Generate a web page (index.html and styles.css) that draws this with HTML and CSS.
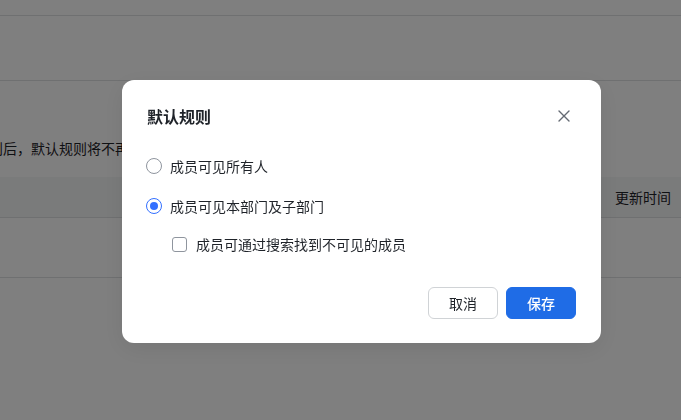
FILE: index.html
```html
<!DOCTYPE html>
<html lang="zh-CN">
<head>
<meta charset="utf-8">
<title>默认规则</title>
<link rel="stylesheet" href="styles.css">
</head>
<body>
<div class="page">
  <div class="topbar"></div>
  <div class="section"></div>
  <div class="desc"><span class="desc-text">设置自定义规则后，默认规则将不再生效</span></div>
  <div class="table-head"><span class="th">更新时间</span></div>
  <div class="table-row"></div>
</div>

<div class="mask">
  <div class="modal">
    <div class="modal-header">
      <h2 class="modal-title">默认规则</h2>
      <button class="close" aria-label="关闭">
        <svg width="12" height="12" viewBox="0 0 12 12"><path d="M1 1L11 11M11 1L1 11" stroke="#646a73" stroke-width="1.4" stroke-linecap="round" fill="none"/></svg>
      </button>
    </div>
    <div class="modal-body">
      <label class="radio-row first"><span class="radio"></span><span class="label">成员可见所有人</span></label>
      <label class="radio-row"><span class="radio checked"></span><span class="label">成员可见本部门及子部门</span></label>
      <label class="check-row"><span class="checkbox"></span><span class="label">成员可通过搜索找到不可见的成员</span></label>
    </div>
    <div class="modal-footer">
      <button class="btn btn-default">取消</button>
      <button class="btn btn-primary">保存</button>
    </div>
  </div>
</div>
</body>
</html>
```

FILE: styles.css
```css
* { box-sizing: border-box; }
html, body { margin: 0; padding: 0; }
body {
  width: 681px;
  height: 420px;
  overflow: hidden;
  background: #ffffff;
  font-family: "Noto Sans CJK SC", "Noto Sans", sans-serif;
  color: #1f2329;
  font-size: 14px;
}
.page { width: 681px; }
.topbar { height: 16px; border-bottom: 1px solid #dee0e3; }
.section { height: 65px; border-bottom: 1px solid #dee0e3; }
.desc {
  height: 96px;
  padding-top: 56px;
  overflow: hidden;
  white-space: nowrap;
  line-height: 22px;
}
.desc-text { display: inline-block; margin-left: -95px; }
.table-head {
  height: 41px;
  background: #f5f6f7;
  border-bottom: 1px solid #dee0e3;
  display: flex;
  justify-content: flex-end;
  align-items: center;
  padding-right: 10px;
  line-height: 22px;
}
.table-row { height: 60px; border-bottom: 1px solid #dee0e3; }

.mask {
  position: fixed;
  inset: 0;
  background: rgba(0, 0, 0, 0.5);
}
.modal {
  position: absolute;
  left: 122px;
  top: 80px;
  width: 479px;
  background: #fff;
  border-radius: 12px;
  padding: 24px 25px 24px 25px;
  box-shadow: 0 6px 24px rgba(0, 0, 0, 0.08);
}
.modal-header {
  display: flex;
  align-items: center;
  justify-content: space-between;
  height: 24px;
}
.modal-title {
  margin: 0;
  font-size: 16px;
  font-weight: 600;
  line-height: 24px;
  color: #1f2329;
}
.close {
  border: 0;
  background: none;
  padding: 0;
  width: 24px;
  height: 24px;
  display: flex;
  align-items: center;
  justify-content: center;
  margin-right: 0;
}
.modal-body { display: flex; flex-direction: column; }
.radio-row, .check-row {
  display: flex;
  align-items: center;
  line-height: 22px;
  height: 22px;
}
.radio-row.first { margin-top: 27px; }
.radio-row + .radio-row { margin-top: 18px; }
.check-row { margin-top: 16px; padding-left: 25px; }
.radio {
  width: 16px;
  height: 16px;
  border-radius: 50%;
  border: 1px solid #8f959e;
  margin-right: 8px;
  margin-left: -1px;
  flex: none;
  position: relative;
}
.radio.checked { border-color: #3370ff; }
.radio.checked::after {
  content: "";
  position: absolute;
  left: 3px;
  top: 3px;
  width: 8px;
  height: 8px;
  border-radius: 50%;
  background: #3370ff;
}
.checkbox {
  width: 15px;
  height: 15px;
  border: 1px solid #8f959e;
  border-radius: 3px;
  margin-right: 9px;
  flex: none;
}
.label { font-size: 14px; color: #1f2329; }
.modal-footer {
  display: flex;
  justify-content: flex-end;
  gap: 8px;
  margin-top: 32px;
}
.btn {
  width: 70px;
  height: 32px;
  border-radius: 6px;
  font-family: "Noto Sans CJK SC", "Noto Sans", sans-serif;
  font-size: 14px;
  padding: 0;
  line-height: 30px;
}
.btn-default {
  background: #fff;
  border: 1px solid #d0d3d6;
  color: #1f2329;
}
.btn-primary {
  background: #1f6ce6;
  border: 1px solid #1f6ce6;
  color: #fff;
  font-weight: 500;
}
```
